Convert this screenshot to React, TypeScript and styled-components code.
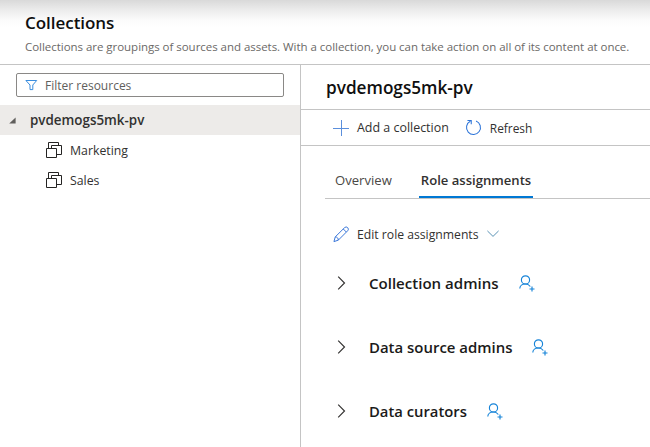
import React from 'react';
import styled, { createGlobalStyle } from 'styled-components';

const GlobalStyle = createGlobalStyle`
  *, *::before, *::after { box-sizing: border-box; }
  body {
    margin: 0;
    overflow: hidden;
    background: #fff;
    color: #323130;
    font-family: "Open Sans", "Noto Sans", sans-serif;
  }
  h1, h2, h3, p { margin: 0; }
  svg { display: block; flex: none; }
`;

const line = '#c4c4c4';

const Page = styled.div`
  display: flex;
  flex-direction: column;
  width: 650px;
  height: 447px;
`;

const Header = styled.header`
  height: 65px;
  padding: 12px 0 0 25px;
  border-bottom: 1px solid ${line};
  background: linear-gradient(#d9d9d9, #ececec 10px, #fbfbfb 20px, #fff 27px);
  white-space: nowrap;
`;

const PageTitle = styled.h1`
  font-size: 17px;
  font-weight: 600;
  line-height: 22px;
  letter-spacing: -0.04px;
  color: #0f0f0f;
`;

const Subtitle = styled.p`
  margin-top: 4px;
  font-size: 11.5px;
  line-height: 17px;
  letter-spacing: -0.035px;
  color: #6b6967;
`;

const Body = styled.div`
  display: flex;
  flex: 1;
  min-height: 0;
`;

const Sidebar = styled.aside`
  width: 301px;
  padding-top: 8px;
  border-right: 1px solid ${line};
`;

const FilterBox = styled.div`
  display: flex;
  align-items: center;
  gap: 7px;
  width: 268px;
  height: 24px;
  margin: 0 0 8px 16px;
  padding-left: 8px;
  border: 1px solid #8a8886;
  border-radius: 2px;
  font-size: 12px;
  color: #605e5c;
`;

const TreeRow = styled.div<{ $root?: boolean }>`
  display: flex;
  align-items: center;
  gap: ${p => (p.$root ? 14 : 8)}px;
  height: 30px;
  padding-left: ${p => (p.$root ? 9 : 46)}px;
  background: ${p => (p.$root ? '#edebe9' : 'transparent')};
  font-size: ${p => (p.$root ? 13.4 : 12.3)}px;
  font-weight: ${p => (p.$root ? 600 : 400)};
`;

const Main = styled.main`
  flex: 1;
  min-width: 0;
  white-space: nowrap;
`;

const Heading = styled.h2`
  height: 45px;
  padding: 0 0 0 25px;
  border-bottom: 1px solid ${line};
  font-size: 17.2px;
  font-weight: 600;
  line-height: 45px;
  color: #0f0f0f;
`;

const Toolbar = styled.div`
  display: flex;
  align-items: center;
  gap: 16px;
  height: 36px;
  padding-left: 32px;
  border-bottom: 1px solid ${line};
`;

const Command = styled.div<{ $size: number }>`
  display: flex;
  align-items: center;
  gap: 8px;
  font-size: ${p => p.$size}px;
  line-height: 18px;
`;

const CommandLabel = styled.span`
  padding-top: 1px;
`;

const Tabs = styled.div`
  display: flex;
  gap: 24px;
  height: 37px;
  margin: 16px 0 0 24px;
  border-bottom: 1px solid ${line};
`;

const Tab = styled.div<{ $active?: boolean }>`
  height: 36px;
  padding: ${p => (p.$active ? '0 2px 0 2px' : '0 3px 0 10px')};
  border-bottom: ${p => (p.$active ? '2px solid #0078d4' : '0')};
  font-size: 13.1px;
  font-weight: ${p => (p.$active ? 600 : 400)};
  line-height: 37px;
  color: ${p => (p.$active ? '#323130' : '#4a4846')};
`;

const EditBar = styled.div`
  padding: 26px 0 0 32px;
`;

const Roles = styled.div`
  display: flex;
  flex-direction: column;
  gap: 40px;
  margin-top: 27px;
  padding-left: 34px;
`;

const Role = styled.div`
  display: flex;
  align-items: center;
  height: 24px;
`;

const RoleName = styled.h3<{ $size: number }>`
  margin: 0 20px 0 23px;
  font-size: ${p => p.$size}px;
  font-weight: 600;
  line-height: 24px;
  color: #1b1a19;
`;

const FilterIcon = () => (
  <svg width="13" height="12" viewBox="0 0 13 12" fill="none" stroke="#3a8dde">
    <path d="M.9 1.500h10.800L7.800 6v4.600H5V6z" />
  </svg>
);

const CaretIcon = () => (
  <svg width="7" height="7" viewBox="0 0 7 7" fill="#605e5c">
    <path d="M6.600.4v6.200H.2z" />
  </svg>
);

const CollectionIcon = () => (
  <svg width="16" height="16" viewBox="0 0 16 16" fill="none" stroke="#252423">
    <path d="M.5 6.500h10v9H.5zM2.500 6.500v-6h10v3M5.500 6.500v-3h10v9h-5" />
  </svg>
);

const PlusIcon = () => (
  <svg width="16" height="16" viewBox="0 0 16 16" stroke="#5b8fdc">
    <path d="M8.500 0v16M0 8.500h16" />
  </svg>
);

const RefreshIcon = () => (
  <svg width="17" height="17" viewBox="0 0 18 18" fill="none" stroke="#2b73d8" strokeWidth="1.1">
    <path d="M11.700 2.100A7.400 7.400 0 1 1 5.600 2.400M2.600 1.600h4v4" />
  </svg>
);

const PencilIcon = () => (
  <svg width="16" height="18" viewBox="0 0 17 18" fill="none" stroke="#2f6fd6">
    <path d="M1 16l1.400-5L12.300 1.200a2.150 2.150 0 0 1 3.300 3.300L5.600 14.500zM2.400 11a3.100 3.100 0 0 1 3.200 3.500M10.900 2.600l3.300 3.300" />
  </svg>
);

const ChevronDown = () => (
  <svg width="12" height="9" viewBox="0 0 12 9" fill="none" stroke="#5a93b5">
    <path d="M.4.900L6 6.400 11.600.900" />
  </svg>
);

const ChevronRight = () => (
  <svg width="11" height="14" viewBox="0 0 11 14" fill="none" stroke="#323130" strokeWidth="1.150">
    <path d="M3.200.700L9.500 7 3.200 13.300" />
  </svg>
);

const AddUserIcon = () => (
  <svg width="17" height="17" viewBox="0 0 17 17" fill="none" stroke="#1583d8" strokeWidth="1.150">
    <circle cx="6.500" cy="4.900" r="4.100" />
    <path d="M.8 13.600C.8 10.800 3.400 9 6.500 9c2.100 0 3.700.900 4.800 2.500M13 11.500v5M10.500 14h5" />
  </svg>
);

const roles = [
  { name: 'Collection admins', size: 15.05 },
  { name: 'Data source admins', size: 14.95 },
  { name: 'Data curators', size: 14.8 },
];

export default function App() {
  return (
    <Page>
      <GlobalStyle />
      <Header>
        <PageTitle>Collections</PageTitle>
        <Subtitle>
          Collections are groupings of sources and assets. With a collection, you can take action on
          all of its content at once.
        </Subtitle>
      </Header>
      <Body>
        <Sidebar>
          <FilterBox>
            <FilterIcon />
            Filter resources
          </FilterBox>
          <TreeRow $root>
            <CaretIcon />
            pvdemogs5mk-pv
          </TreeRow>
          {['Marketing', 'Sales'].map(name => (
            <TreeRow key={name}>
              <CollectionIcon />
              {name}
            </TreeRow>
          ))}
        </Sidebar>
        <Main>
          <Heading>pvdemogs5mk-pv</Heading>
          <Toolbar>
            <Command $size={12.45}>
              <PlusIcon />
              <CommandLabel>Add a collection</CommandLabel>
            </Command>
            <Command $size={11.9}>
              <RefreshIcon />
              <CommandLabel>Refresh</CommandLabel>
            </Command>
          </Toolbar>
          <Tabs>
            <Tab>Overview</Tab>
            <Tab $active>Role assignments</Tab>
          </Tabs>
          <EditBar>
            <Command $size={12.2}>
              <PencilIcon />
              <CommandLabel>Edit role assignments</CommandLabel>
              <ChevronDown />
            </Command>
          </EditBar>
          <Roles>
            {roles.map(role => (
              <Role key={role.name}>
                <ChevronRight />
                <RoleName $size={role.size}>{role.name}</RoleName>
                <AddUserIcon />
              </Role>
            ))}
          </Roles>
        </Main>
      </Body>
    </Page>
  );
}
